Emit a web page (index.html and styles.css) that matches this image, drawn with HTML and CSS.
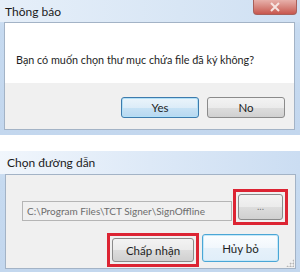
FILE: index.html
```html
<!DOCTYPE html>
<html>
<head>
<meta charset="utf-8">
<link rel="stylesheet" href="styles.css">
</head>
<body>
<div class="page">
  <div class="dlg dlg1">
    <div class="titlebar">
      <span class="title">Thông báo</span>
      <span class="close"><svg width="12" height="10" viewBox="0 0 12 10"><path d="M2 1 L10 9 M10 1 L2 9" stroke="#f6e3e0" stroke-width="2" fill="none"/></svg></span>
    </div>
    <div class="client">
      <div class="msg">Bạn có muốn chọn thư mục chứa file đã ký không?</div>
      <div class="actions">
        <div class="btn focus">Yes</div>
        <div class="btn">No</div>
      </div>
    </div>
  </div>

  <div class="dlg dlg2">
    <div class="titlebar t2">
      <span class="title">Chọn đường dẫn</span>
    </div>
    <div class="client client2">
      <div class="pathrow">
        <div class="field">C:\Program Files\TCT Signer\SignOffline</div>
        <div class="mark markdots"><div class="btn dots">...</div></div>
      </div>
      <div class="btnrow">
        <div class="mark markok"><div class="btn ok">Chấp nhận</div></div>
        <div class="btn focus cancel">Hủy bỏ</div>
      </div>
      <span class="grip"></span>
    </div>
  </div>
</div>
</body>
</html>
```
FILE: styles.css
```css
html, body { margin: 0; padding: 0; background: #fff; }
body { font-family: "Lato", "Open Sans", sans-serif; font-size: 12px; color: #1e1e1e; }
.page { display: flex; flex-direction: column; gap: 16px; width: 300px; }

.dlg {
  background: linear-gradient(#dbe8f6, #c6daf0 30px, #c3d7ee);
  padding: 0 5px 5px 4px;
  box-sizing: border-box;
  width: 300px;
}
.dlg2 { padding: 0 4px 4px 5px; }

.titlebar {
  height: 22px;
  display: flex;
  align-items: flex-start;
  justify-content: space-between;
  background: linear-gradient(90deg, #e6eff9, #d8e6f5 60%, #cfe0f3);
  margin: 0 -5px 0 -4px;
  padding-left: 5px;
}
.t2 { height: 23px; margin: 0 -4px 0 -5px; padding-left: 7px; background: linear-gradient(90deg, #f1f6fc, #dde9f7 50%, #cbddf2); }
.title { font-size: 12px; line-height: 12px; padding-top: 6px; color: #1b1b1b; }
.close {
  width: 44px; height: 15px;
  margin-right: 3px;
  display: flex; align-items: center; justify-content: center;
  background: linear-gradient(#e7b0aa, #d88a82 45%, #c8574e);
  border: 1px solid #a8605a; border-top: none;
  border-radius: 0 0 4px 4px;
  box-sizing: border-box;
}

.client { background: #f0f0f0; border: 1px solid #a3b3c6; }
.dlg1 .client { height: 108px; box-sizing: border-box; }
.msg {
  background: #fff;
  height: 60px;
  box-sizing: border-box;
  padding: 29px 0 0 11px;
  line-height: 16px;
  font-size: 10.8px;
  color: #1e1e1e;
}
.actions { display: flex; justify-content: flex-end; gap: 8px; padding: 14px 9px 0 0; }

.btn {
  width: 78px; height: 21px;
  box-sizing: border-box;
  display: flex; align-items: center; justify-content: center;
  font-size: 11.5px; color: #1e1e1e;
  border: 1px solid #8b8b8b;
  border-radius: 3px;
  background: linear-gradient(#f3f3f3, #ebebeb 50%, #dddddd 51%, #d0d0d0);
}
.btn.focus {
  border-color: #3d7bad;
  background: linear-gradient(#eaf4fb, #dcecf8 50%, #c7e2f5 51%, #b7d8f0);
  box-shadow: inset 0 0 0 1px #b2e0f7;
}

.client2 { height: 95px; box-sizing: border-box; padding: 14px 7px 0 16px; position: relative; }
.pathrow { display: flex; justify-content: space-between; align-items: flex-start; }
.field {
  width: 210px; height: 20px; margin-top: 12px;
  box-sizing: border-box;
  border: 1px solid #b5b5b5;
  background: #f0f0f0;
  color: #6d6d6d;
  font-size: 10px;
  line-height: 18px;
  padding-left: 4px;
  white-space: nowrap;
  overflow: hidden;
}
.mark { border: 3px solid #dc2433; padding: 2px; }
.btn.dots { width: 45px; height: 26px; color: #7a7a7a; font-size: 10px; line-height: 10px; padding-bottom: 3px; }
.btnrow { display: flex; justify-content: flex-end; align-items: flex-start; gap: 3px; padding: 8px 9px 0 0; }
.btn.ok { width: 82px; height: 24px; }
.btn.cancel { width: 77px; height: 28px; margin-top: 1px; background: linear-gradient(#fbfdff, #f1f7fc 50%, #e6f1fa 51%, #e0eef9); box-shadow: inset 0 0 0 1px #c6e8f8; border-color: #4aa6d6; }
.grip {
  position: absolute; right: 1px; bottom: 1px; width: 8px; height: 8px;
  background: radial-gradient(circle, #b4b4b4 0.8px, transparent 1.2px) 0 0 / 3px 3px;
  clip-path: polygon(100% 0, 100% 100%, 0 100%);
}
```
